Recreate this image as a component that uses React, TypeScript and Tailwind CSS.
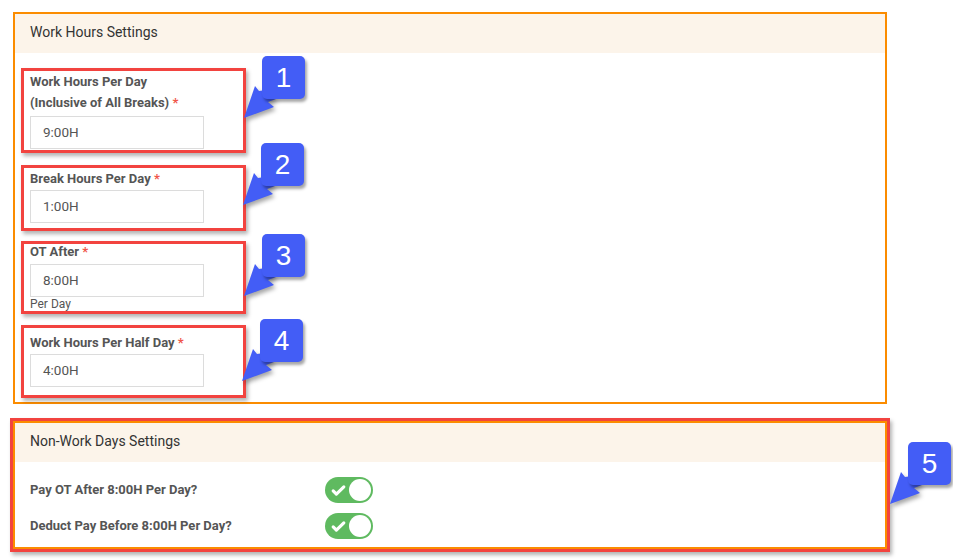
import React from 'react';

const FieldBox: React.FC<{ className?: string; children: React.ReactNode }> = ({ className = '', children }) => (
  <div className={`w-[225px] border-[3px] border-[#f2433f] pl-[6px] shadow-[2px_3px_4px_rgba(0,0,0,0.3)] ${className}`}>
    {children}
  </div>
);

const Req = () => <span className="text-[#f0564a]"> *</span>;

const TimeInput: React.FC<{ value: string; className?: string }> = ({ value, className = '' }) => (
  <div className={`w-[174px] h-[33px] border border-[#dcdcdc] bg-white flex items-center px-[12px] text-[13.5px] font-normal text-[#555] ${className}`}>
    {value}
  </div>
);

const Toggle = () => (
  <div className="w-[48px] h-[26px] rounded-full bg-[#5fba60] flex items-center justify-between pl-[5px] pr-[2px]">
    <svg width="17" height="17" viewBox="0 0 24 24" fill="none" stroke="white" strokeWidth="4.5" strokeLinecap="round" strokeLinejoin="round">
      <path d="M4.5 12.5l4.5 4.5L19.5 7" />
    </svg>
    <div className="w-[22px] h-[22px] rounded-full bg-white" />
  </div>
);

// numbered annotation: box top-left at (x, y), arrow points down-left
const Callout: React.FC<{ n: number; x: number; y: number }> = ({ n, x, y }) => (
  <div className="absolute w-[43px] h-[43px]" style={{ left: x, top: y }}>
    <svg
      className="absolute left-[-20px] top-[28px] drop-shadow-[2px_3px_2px_rgba(0,0,0,0.35)]"
      width="40"
      height="36"
      viewBox="-20 28 40 36"
    >
      <polygon points="-18,62 -7,30 -3,35 4,34 14,43 6,46 12,51" fill="#435df6" />
    </svg>
    <div className="absolute inset-0 rounded-[5px] bg-[#435df6] shadow-[2px_3px_3px_rgba(0,0,0,0.35)] flex items-center justify-center text-white text-[28px] leading-none font-['Liberation_Sans',Arial,sans-serif]">
      {n}
    </div>
  </div>
);

export default function App() {
  return (
    <div className="relative w-[953px] h-[560px] bg-white overflow-hidden font-['Roboto','Noto_Sans',sans-serif] pl-[13px] pt-[12px]">
      {/* Work hours panel */}
      <div className="w-[874px] border-2 border-[#fb8c00]">
        <div className="h-[39px] bg-[#fcf4ea] flex items-center pl-[15px] pb-[2px] text-[14px] text-[#333]">
          Work Hours Settings
        </div>
        <div className="pl-[6px] pt-[15px] pb-[4px] flex flex-col text-[13px] text-[#555]">
          <FieldBox className="pb-[1px]">
            <div className="font-bold leading-[21px]">Work Hours Per Day</div>
            <div className="font-bold leading-[21px]">
              (Inclusive of All Breaks)<Req />
            </div>
            <TimeInput value="9:00H" className="mt-[3px]" />
          </FieldBox>

          <FieldBox className="mt-[12px] pb-[5px]">
            <div className="font-bold leading-[21px]">
              Break Hours Per Day<Req />
            </div>
            <TimeInput value="1:00H" className="mt-[1px]" />
          </FieldBox>

          <FieldBox className="mt-[10px]">
            <div className="font-bold leading-[16px]">
              OT After<Req />
            </div>
            <TimeInput value="8:00H" className="mt-[4px]" />
            <div className="leading-[14px] text-[12px]">Per Day</div>
          </FieldBox>

          <FieldBox className="mt-[11px] pt-[4px] pb-[8px]">
            <div className="font-bold leading-[21px]">
              Work Hours Per Half Day<Req />
            </div>
            <TimeInput value="4:00H" className="mt-[1px]" />
          </FieldBox>
        </div>
      </div>

      {/* Non-work days panel */}
      <div className="ml-[-3px] mt-[14px] w-[880px] border-[3px] border-[#f2433f] shadow-[2px_3px_4px_rgba(0,0,0,0.3)]">
        <div className="border-2 border-[#fb8c00]">
          <div className="h-[39px] bg-[#fcf4ea] flex items-center pl-[15px] pb-[2px] text-[14px] text-[#333]">
            Non-Work Days Settings
          </div>
          <div className="pt-[15px] pb-[8px] flex flex-col gap-[10px] text-[13px] font-bold text-[#555]">
            <div className="h-[26px] flex items-center">
              <div className="w-[310px] pl-[15px]">Pay OT After 8:00H Per Day?</div>
              <Toggle />
            </div>
            <div className="h-[26px] flex items-center">
              <div className="w-[310px] pl-[15px]">Deduct Pay Before 8:00H Per Day?</div>
              <Toggle />
            </div>
          </div>
        </div>
      </div>

      <Callout n={1} x={262} y={56} />
      <Callout n={2} x={261} y={143} />
      <Callout n={3} x={262} y={234} />
      <Callout n={4} x={260} y={319} />
      <Callout n={5} x={908} y={442} />
    </div>
  );
}
